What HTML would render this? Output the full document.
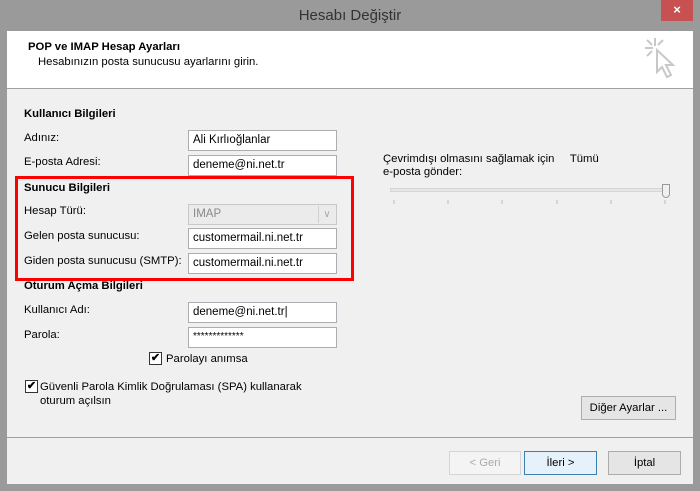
<!DOCTYPE html>
<html><head><meta charset="utf-8"><style>
*{margin:0;padding:0;box-sizing:border-box}
body{width:700px;height:491px;background:#9a9a9a;font-family:"Liberation Sans",sans-serif;font-size:11.3px;color:#000;position:relative;overflow:hidden}
.a{position:absolute;white-space:nowrap}
.in{position:absolute;left:188px;width:149px;height:21px;background:#fff;border:1px solid #abadb3;padding:3px 0 0 4px;font-size:11.5px}
.b{font-weight:bold}
.btn{position:absolute;height:24px;border:1px solid #acacac;background:#e5e5e5;text-align:center;line-height:22px}
.cb{position:absolute;width:13px;height:13px;border:1px solid #333;background:#fff;font-size:11px;line-height:11px;text-align:center;font-weight:bold}
</style></head><body>
<div class="a" style="left:0;top:0;width:700px;height:31px;text-align:center;line-height:32px;font-size:15px;color:#333">Hesabı Değiştir</div>
<div class="a" style="left:661px;top:0;width:32px;height:21px;background:#c75050;color:#fff;text-align:center;line-height:20px;font-size:13px;font-weight:bold">×</div>
<div class="a" style="left:7px;top:31px;width:686px;height:453px;background:#f0f0f0"></div>
<div class="a" style="left:7px;top:31px;width:686px;height:58px;background:#fff;border-bottom:1px solid #a0a0a0"></div>
<div class="a b" style="left:28px;top:41px">POP ve IMAP Hesap Ayarları</div>
<div class="a" style="left:38px;top:56px">Hesabınızın posta sunucusu ayarlarını girin.</div>
<svg class="a" style="left:643px;top:36px" width="40" height="50" viewBox="0 0 40 50"><g stroke="#c8c8c8" stroke-width="2" fill="none"><path d="M12 2v8M2 12h8M4 4l5 5M20 4l-5 5M4 20l5-5"/><path d="M14 14l0 22 5-5 5 10 4-2-5-10 7 0z" fill="#fff"/></g></svg>
<div class="a b" style="left:24px;top:108px">Kullanıcı Bilgileri</div>
<div class="a" style="left:24px;top:132px">Adınız:</div>
<div class="in" style="top:130px">Ali Kırlıoğlanlar</div>
<div class="a" style="left:24px;top:156px">E-posta Adresi:</div>
<div class="in" style="top:155px">deneme@ni.net.tr</div>
<div class="a" style="left:15px;top:176px;width:339px;height:105px;border:3px solid #f00"></div>
<div class="a b" style="left:24px;top:182px">Sunucu Bilgileri</div>
<div class="a" style="left:24px;top:205px">Hesap Türü:</div>
<div class="in" style="top:204px;background:#ebebeb;border-color:#c8c8c8;color:#888">IMAP<span style="position:absolute;right:1px;top:1px;width:17px;height:17px;border-left:1px solid #d0d0d0;color:#aaa;text-align:center;font-size:10px;line-height:17px">∨</span></div>
<div class="a" style="left:24px;top:230px">Gelen posta sunucusu:</div>
<div class="in" style="top:228px">customermail.ni.net.tr</div>
<div class="a" style="left:24px;top:255px">Giden posta sunucusu (SMTP):</div>
<div class="in" style="top:253px">customermail.ni.net.tr</div>
<div class="a b" style="left:24px;top:280px">Oturum Açma Bilgileri</div>
<div class="a" style="left:24px;top:304px">Kullanıcı Adı:</div>
<div class="in" style="top:302px">deneme@ni.net.tr|</div>
<div class="a" style="left:24px;top:329px">Parola:</div>
<div class="in" style="top:327px;font-size:10px">*************</div>
<div class="cb" style="left:149px;top:352px">✔</div>
<div class="a" style="left:166px;top:353px">Parolayı anımsa</div>
<div class="cb" style="left:25px;top:380px">✔</div>
<div class="a" style="left:40px;top:380px;line-height:14px">Güvenli Parola Kimlik Doğrulaması (SPA) kullanarak<br>oturum açılsın</div>
<div class="a" style="left:383px;top:153px;line-height:13px">Çevrimdışı olmasını sağlamak için&nbsp;&nbsp;&nbsp;&nbsp; Tümü<br>e-posta gönder:</div>
<div class="a" style="left:390px;top:188px;width:278px;height:4px;background:#e6e6e6;border:1px solid #d6d6d6"></div>
<div class="a" style="left:662px;top:184px;width:8px;height:14px;background:#f0f0f0;border:1px solid #999;border-radius:0 0 4px 4px"></div>
<svg class="a" style="left:390px;top:200px" width="280" height="6"><g stroke="#bbb"><path d="M4 0v4M58 0v4M112 0v4M167 0v4M221 0v4M275 0v4"/></g></svg>
<div class="btn" style="left:581px;top:396px;width:95px">Diğer Ayarlar ...</div>
<div class="a" style="left:7px;top:437px;width:686px;height:1px;background:#a0a0a0"></div>
<div class="btn" style="left:449px;top:451px;width:72px;color:#aaa;border-color:#d5d5d5;background:#f4f4f4">&lt; Geri</div>
<div class="btn" style="left:524px;top:451px;width:73px;border-color:#3c7fb1;background:#e5f1fb">İleri &gt;</div>
<div class="btn" style="left:608px;top:451px;width:73px">İptal</div>
</body></html>
